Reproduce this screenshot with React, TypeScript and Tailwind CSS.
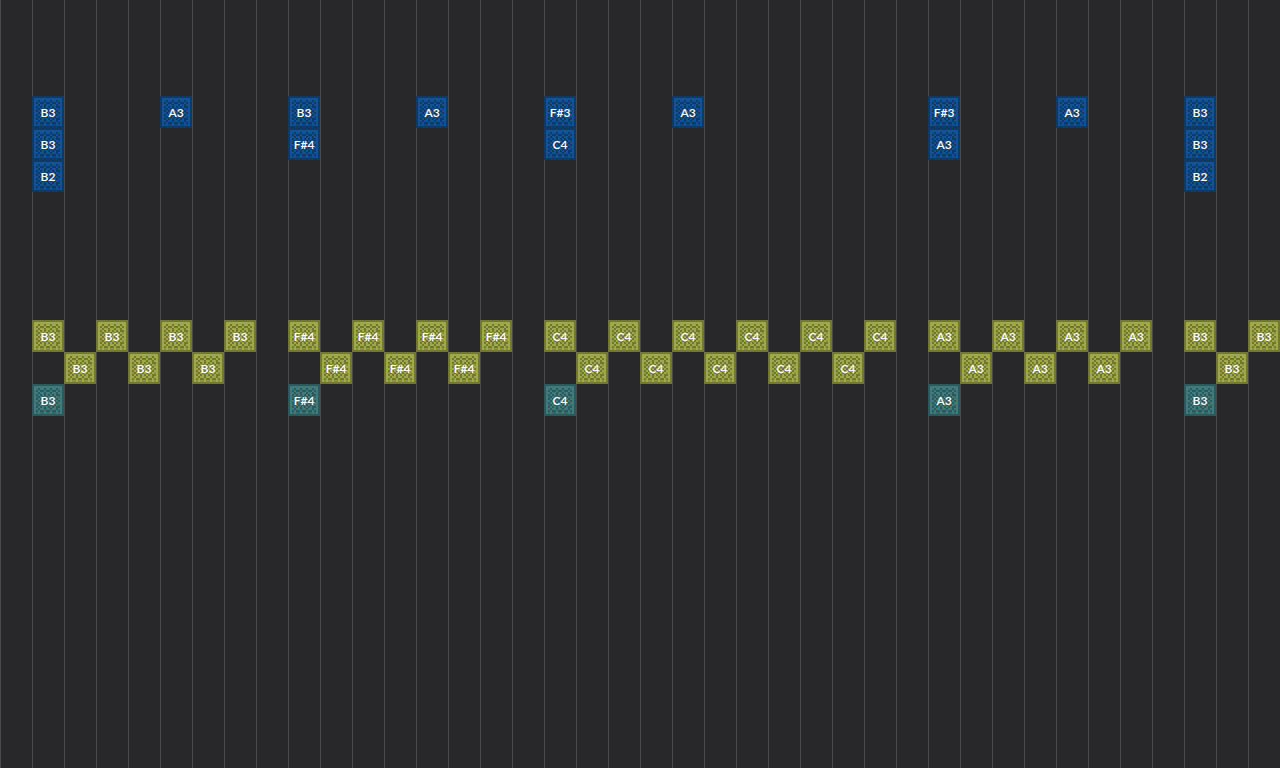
import clsx from "clsx";

type Layer = "harp" | "bell" | "bass";

interface Note {
  tick: number;
  row: number;
  pitch: string;
  layer: Layer;
}

const ticks = (row: number, layer: Layer, entries: [string, number[]][]): Note[] =>
  entries.flatMap(([pitch, at]) => at.map((tick) => ({ tick, row, pitch, layer })));

const notes: Note[] = [
  ...ticks(3, "harp", [
    ["B3", [1, 9, 37]],
    ["A3", [5, 13, 21, 33]],
    ["F#3", [17, 29]],
  ]),
  ...ticks(4, "harp", [
    ["B3", [1, 37]],
    ["F#4", [9]],
    ["C4", [17]],
    ["A3", [29]],
  ]),
  ...ticks(5, "harp", [["B2", [1, 37]]]),
  ...ticks(10, "bell", [
    ["B3", [1, 3, 5, 7, 37, 39]],
    ["F#4", [9, 11, 13, 15]],
    ["C4", [17, 19, 21, 23, 25, 27]],
    ["A3", [29, 31, 33, 35]],
  ]),
  ...ticks(11, "bell", [
    ["B3", [2, 4, 6, 38]],
    ["F#4", [10, 12, 14]],
    ["C4", [18, 20, 22, 24, 26]],
    ["A3", [30, 32, 34]],
  ]),
  ...ticks(12, "bass", [
    ["B3", [1, 37]],
    ["F#4", [9]],
    ["C4", [17]],
    ["A3", [29]],
  ]),
];

const layerStyles: Record<Layer, string> = {
  harp: "bg-[#125296] text-[#0f3761]",
  bell: "bg-[#a0a84a] text-[#6b7230]",
  bass: "bg-[#3f7b7c] text-[#2b5556]",
};

// 16x16 block texture: # is shadow, + is half shadow
const texture = [
  "################",
  "#..............#",
  "#..#..#..#..#..#",
  "#.#.##.##.##.#.#",
  "#..#..#..#..#..#",
  "#.#.#.#.#.#.##.#",
  "#.+#.#.#.#.#.+.#",
  "#.#.#.#.#.#.#..#",
  "#..#.#.#.#.#.#.#",
  "#.#.#.#.#.#.#..#",
  "#.+#.#.#.#.#.+.#",
  "#.#.#.#.#.#.##.#",
  "#..#..#..#..#..#",
  "#.#.##.##.##.#.#",
  "#.+.++.++.++.+.#",
  "################",
];

function BlockTexture() {
  return (
    <svg
      viewBox="0 0 16 16"
      shapeRendering="crispEdges"
      fill="currentColor"
      aria-hidden="true"
      className="col-start-1 row-start-1 size-8"
    >
      {texture.flatMap((line, y) =>
        [...line].map((cell, x) =>
          cell === "." ? null : (
            <rect key={`${x}-${y}`} x={x} y={y} width={1} height={1} opacity={cell === "+" ? 0.4 : 0.9} />
          ),
        ),
      )}
    </svg>
  );
}

function NoteBlock({ note }: { note: Note }) {
  return (
    <div
      className={clsx("grid size-8 place-items-center", layerStyles[note.layer])}
      style={{ gridColumnStart: note.tick + 1, gridRowStart: note.row + 1 }}
    >
      <BlockTexture />
      <span className="z-10 col-start-1 row-start-1 pt-0.5 text-xs leading-4 font-semibold text-white">
        {note.pitch}
      </span>
    </div>
  );
}

export default function App() {
  return (
    <main className="grid min-h-screen auto-cols-[32px] auto-rows-[32px] overflow-hidden bg-[#28282a] bg-[linear-gradient(to_right,#4a4a4c_1px,transparent_1px)] bg-[length:32px_100%] font-['Lato',sans-serif] select-none">
      {notes.map((note) => (
        <NoteBlock key={`${note.tick}-${note.row}`} note={note} />
      ))}
    </main>
  );
}
